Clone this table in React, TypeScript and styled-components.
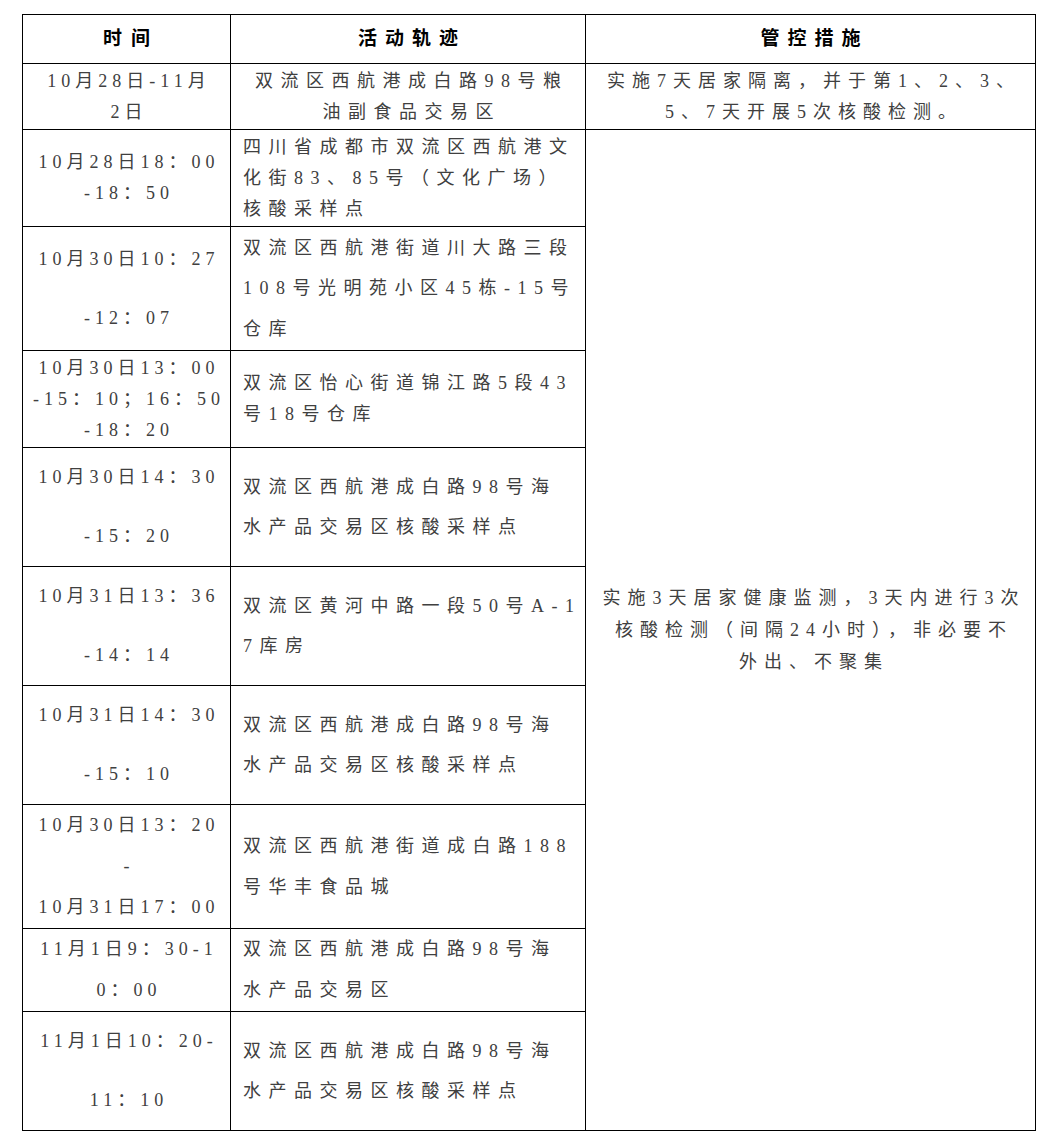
import React from "react";
import styled, { createGlobalStyle } from "styled-components";

const GlobalStyle = createGlobalStyle`
  html, body {
    margin: 0;
    padding: 0;
    background: #ffffff;
  }
  body {
    font-family: "Liberation Serif", "Noto Sans CJK SC", serif;
  }
`;

const Page = styled.div`
  padding: 14px 0 0 22px;
  width: 1044px;
  box-sizing: border-box;
`;

const Sheet = styled.table`
  border-collapse: collapse;
  table-layout: fixed;
  width: 1013px;
  font-family: "Liberation Serif", "Noto Sans CJK SC", serif;
  font-size: 18px;
  color: #404040;
`;

const Col = styled.col<{ $w: number }>`
  width: ${(p) => p.$w}px;
`;

const Row = styled.tr<{ $h: number }>`
  height: ${(p) => p.$h}px;
`;

const HeadCell = styled.th`
  border: 1px solid #000;
  padding: 0;
  text-align: center;
  vertical-align: middle;
  font-weight: 700;
  color: #000;
  font-size: 19px;
`;

const Cell = styled.td<{ $align?: "left" | "center"; $padLeft?: number }>`
  border: 1px solid #000;
  padding: 0 0 0 ${(p) => p.$padLeft ?? 0}px;
  text-align: ${(p) => p.$align ?? "center"};
  vertical-align: middle;
`;

const Line = styled.div<{ $spacing: number; $lh: number; $center?: boolean }>`
  white-space: nowrap;
  letter-spacing: ${(p) => p.$spacing}px;
  line-height: ${(p) => p.$lh}px;
  padding-left: ${(p) => (p.$center ? p.$spacing : 0)}px;
`;

type RowData = {
  h: number;
  time: string[];
  tlh: number;
  loc: string[];
  llh: number;
  locCenter?: boolean;
};

const rows: RowData[] = [
  {
    h: 66,
    time: ["10月28日-11月", "2日"],
    tlh: 31,
    loc: ["双流区西航港成白路98号粮", "油副食品交易区"],
    llh: 31,
    locCenter: true,
  },
  {
    h: 97,
    time: ["10月28日18：00", "-18：50"],
    tlh: 31,
    loc: ["四川省成都市双流区西航港文", "化街83、85号（文化广场）", "核酸采样点"],
    llh: 31,
  },
  {
    h: 124,
    time: ["10月30日10：27", "-12：07"],
    tlh: 59,
    loc: ["双流区西航港街道川大路三段", "108号光明苑小区45栋-15号", "仓库"],
    llh: 40.5,
  },
  {
    h: 97,
    time: ["10月30日13：00", "-15：10；16：50", "-18：20"],
    tlh: 31,
    loc: ["双流区怡心街道锦江路5段43", "号18号仓库"],
    llh: 31,
  },
  {
    h: 119,
    time: ["10月30日14：30", "-15：20"],
    tlh: 59,
    loc: ["双流区西航港成白路98号海", "水产品交易区核酸采样点"],
    llh: 40.5,
  },
  {
    h: 119,
    time: ["10月31日13：36", "-14：14"],
    tlh: 59,
    loc: ["双流区黄河中路一段50号A-1", "7库房"],
    llh: 40.5,
  },
  {
    h: 119,
    time: ["10月31日14：30", "-15：10"],
    tlh: 59,
    loc: ["双流区西航港成白路98号海", "水产品交易区核酸采样点"],
    llh: 40.5,
  },
  {
    h: 124,
    time: ["10月30日13：20", "-", "10月31日17：00"],
    tlh: 41,
    loc: ["双流区西航港街道成白路188", "号华丰食品城"],
    llh: 40.5,
  },
  {
    h: 83,
    time: ["11月1日9：30-1", "0：00"],
    tlh: 41,
    loc: ["双流区西航港成白路98号海", "水产品交易区"],
    llh: 41,
  },
  {
    h: 119,
    time: ["11月1日10：20-", "11：10"],
    tlh: 59,
    loc: ["双流区西航港成白路98号海", "水产品交易区核酸采样点"],
    llh: 40.5,
  },
];

const firstMeasure = ["实施7天居家隔离，并于第1、2、3、", "5、7天开展5次核酸检测。"];
const bigMeasure = [
  "实施3天居家健康监测，3天内进行3次",
  "核酸检测（间隔24小时），非必要不",
  "外出、不聚集",
];

const TIME_SP = 5;
const LOC_SP = 7.5;
const MEAS_SP = 7;

export default function App() {
  return (
    <Page>
      <GlobalStyle />
      <Sheet>
        <colgroup>
          <Col $w={208} />
          <Col $w={355} />
          <Col $w={450} />
        </colgroup>
        <thead>
          <Row $h={49}>
            <HeadCell>
              <Line $spacing={9} $lh={30} $center>
                时间
              </Line>
            </HeadCell>
            <HeadCell>
              <Line $spacing={8} $lh={30} $center>
                活动轨迹
              </Line>
            </HeadCell>
            <HeadCell>
              <Line $spacing={8} $lh={30} $center>
                管控措施
              </Line>
            </HeadCell>
          </Row>
        </thead>
        <tbody>
          {rows.map((r, i) => (
            <Row $h={r.h} key={i}>
              <Cell>
                {r.time.map((t, j) => (
                  <Line key={j} $spacing={TIME_SP} $lh={r.tlh} $center>
                    {t}
                  </Line>
                ))}
              </Cell>
              <Cell
                $align={r.locCenter ? "center" : "left"}
                $padLeft={r.locCenter ? 0 : 12}
              >
                {r.loc.map((t, j) => (
                  <Line key={j} $spacing={LOC_SP} $lh={r.llh} $center={r.locCenter}>
                    {t}
                  </Line>
                ))}
              </Cell>
              {i === 0 && (
                <Cell>
                  {firstMeasure.map((t, j) => (
                    <Line key={j} $spacing={MEAS_SP} $lh={31} $center>
                      {t}
                    </Line>
                  ))}
                </Cell>
              )}
              {i === 1 && (
                <Cell rowSpan={rows.length - 1}>
                  {bigMeasure.map((t, j) => (
                    <Line key={j} $spacing={MEAS_SP} $lh={32} $center>
                      {t}
                    </Line>
                  ))}
                </Cell>
              )}
            </Row>
          ))}
        </tbody>
      </Sheet>
    </Page>
  );
}
